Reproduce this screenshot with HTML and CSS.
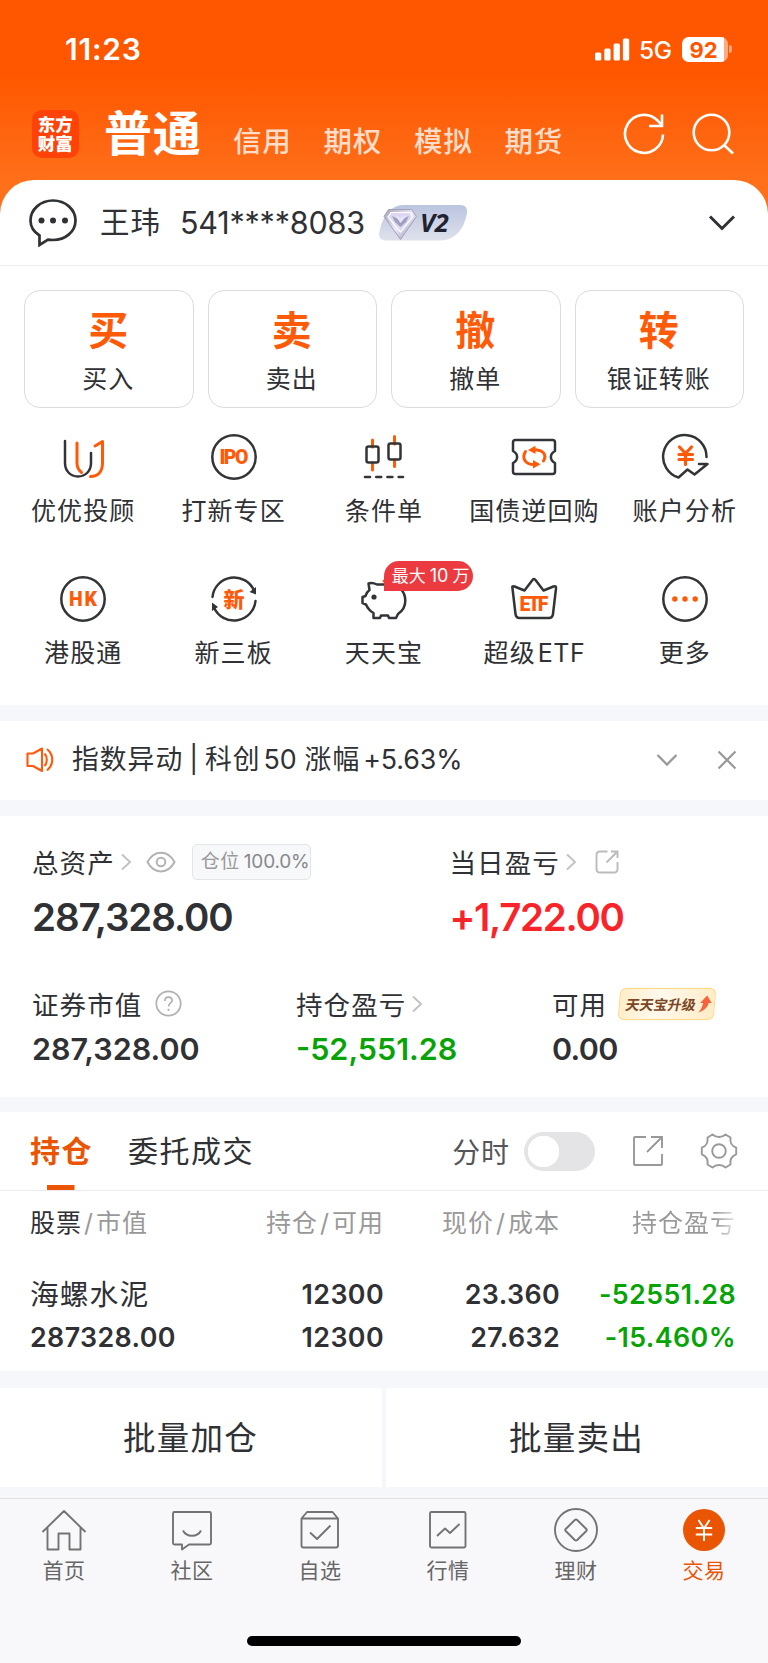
FILE: index.html
```html
<!DOCTYPE html>
<html lang="zh-CN">
<head>
<meta charset="utf-8">
<title>普通交易</title>
<link rel="stylesheet" href="styles.css">
</head>
<body>
<div class="app">
  <header class="top">
    <div class="status">
      <span class="time">11:23</span>
      <svg class="signal" width="35" height="23" viewBox="0 0 35 23" fill="#fff"><rect x="0" y="14.500" width="6.300" height="8" rx="1.500"/><rect x="9.300" y="10.500" width="6.300" height="12" rx="1.500"/><rect x="18.600" y="5.500" width="6.300" height="17" rx="1.500"/><rect x="27.900" y="0.500" width="6.300" height="22" rx="1.500"/></svg>
      <span class="net">5G</span>
      <span class="battery"><span class="level">92</span></span><i class="cap"></i>
    </div>
    <nav class="modes">
      <div class="logo"><span>东方</span><span>财富</span></div>
      <span class="mode on">普通</span>
      <span class="mode">信用</span><span class="mode">期权</span><span class="mode">模拟</span><span class="mode">期货</span>
      <svg class="refresh" width="44" height="44" viewBox="0 0 44 44" fill="none" stroke="#fff" stroke-width="2.600"><path d="M41 22.500A19 19 0 1 1 35.500 8.500L40 13.500M40 2.500V14H27"/></svg>
      <svg class="search" width="44" height="44" viewBox="0 0 44 44" fill="none" stroke="#fff" stroke-width="2.600"><circle cx="20.500" cy="20.500" r="17.800"/><path d="M32.500 32.500L42 41.500"/></svg>
    </nav>
  </header>

  <main class="sheet">
    <div class="account">
      <svg class="chat" width="48" height="48" viewBox="0 0 48 48" fill="none" stroke="#303134" stroke-width="2.700"><path d="M10.500 46V36.500C5 33 1.500 27.500 1.500 21.500 1.500 10.500 11.500 1.500 24 1.500s22.500 9 22.500 20S36.500 41 24 41c-1.500 0-3.500-.1-5-.4z"/><g fill="#303134" stroke="none"><circle cx="12.500" cy="21.500" r="3"/><circle cx="24" cy="21.500" r="3"/><circle cx="36" cy="21.500" r="3"/></g></svg>
      <span class="name">王玮</span><span class="number">541****8083</span>
      <div class="vip">
        <svg width="90" height="38" viewBox="0 0 90 38"><defs><linearGradient id="vb" x1="0" y1="0" x2="0" y2="1"><stop offset="0" stop-color="#bac4df"/><stop offset="1" stop-color="#dfe2ec"/></linearGradient><linearGradient id="vd" x1="0" y1="0" x2="1" y2="1"><stop offset="0" stop-color="#a5a2b8"/><stop offset=".5" stop-color="#ece9fb"/><stop offset="1" stop-color="#8f8aa3"/></linearGradient></defs><path d="M25 1H82Q90 1 89 9C87 20 81 36 62 36.500H8Q1 36.500 1 30C3 18 9 2 25 1z" fill="url(#vb)"/><path d="M10.500 5.500H33.500L38.500 12.500 22.500 35.500 6 12.500z" fill="url(#vd)" stroke="#a3a1b6" stroke-width="1"/><path d="M13 8.500H32L34.500 13 22.500 28 10 13z" fill="#dcd8ef" stroke="#fff" stroke-width="1.200"/><path d="M14 12l8.500 4 8.500-4-3 6-5.500 5-5.500-5z" fill="#a19ec0"/><path d="M17 11l5.500 3 6.500-3-6.500 8z" fill="#e6e5fa"/></svg>
        <span>V2</span>
      </div>
      <svg class="down" width="28" height="18" viewBox="0 0 28 18" fill="none" stroke="#303134" stroke-width="3"><path d="M2 2.500L14 14.500 26 2.500"/></svg>
    </div>

    <section class="actions">
      <div class="action"><b>买</b><span>买入</span></div>
      <div class="action"><b>卖</b><span>卖出</span></div>
      <div class="action"><b>撤</b><span>撤单</span></div>
      <div class="action"><b>转</b><span>银证转账</span></div>
    </section>

    <section class="tools">
      <div class="tool"><svg viewBox="0 0 48 48"><path class="k" d="M6 8V30C6 38 11.500 43.500 19 43.500S32 38 32 30V20"/><path class="o" d="M18 10V30C18 34 19.500 37 22.500 39.500M36 13L43.500 8.500V30C43.500 38.500 39 43.500 31.500 43.500"/></svg><span>优优投顾</span></div>
      <div class="tool"><svg viewBox="0 0 48 48"><circle class="k" cx="24" cy="24" r="21.700"/><text class="t" x="24" y="31" textLength="29">IPO</text></svg><span>打新专区</span></div>
      <div class="tool"><svg viewBox="0 0 48 48"><path class="o" d="M12.500 7V14M12.500 30V37M34.500 3.500V11M34.500 26.500V33.500"/><rect class="k" x="6.500" y="13.500" width="12" height="16" rx="2"/><rect class="k" x="28.500" y="10.500" width="12" height="16" rx="2"/><path class="k" stroke-dasharray="5 6.200" d="M5 44H43"/></svg><span>条件单</span></div>
      <div class="tool"><svg viewBox="0 0 48 48"><path class="k" d="M5.500 7H42.500Q45 7 45 9.500V18C39.500 21 39.500 27 45 30V38.500Q45 41 42.500 41H5.500Q3 41 3 38.500V30C8.500 27 8.500 21 3 18V9.500Q3 7 5.500 7z"/><path class="o" d="M15.500 18.500C11.500 25 15 31.500 24 31.500M33.500 28C37 22 33.500 16.800 24 16.800"/><path class="of" d="M18 17L25.500 12.800V21zM30.500 31.300L23 27V35.500z"/></svg><span>国债逆回购</span></div>
      <div class="tool"><svg viewBox="0 0 48 48"><path class="k" d="M45.500 24A21.700 21.700 0 1 0 17.500 44.500L26.500 36.500 33.500 41.500 46.500 31H38"/><path class="o y" d="M18.500 14L24.500 20.500 30.500 14M24.500 21V31.500M18 21.500H31.500M18 26.500H31.500"/></svg><span>账户分析</span></div>
      <div class="tool"><svg viewBox="0 0 48 48"><circle class="k" cx="24" cy="24" r="21.700"/><text class="t" x="24" y="31" textLength="28">HK</text></svg><span>港股通</span></div>
      <div class="tool"><svg viewBox="0 0 48 48"><path class="k" d="M2.500 22A21.700 21.700 0 0 1 44 15.500M45.500 26A21.700 21.700 0 0 1 4 32.500"/><path class="kf" d="M46 12V19.500L39.500 17zM2 36V27.500L8 32z"/><text class="t xin" x="24" y="32">新</text></svg><span>新三板</span></div>
      <div class="tool"><svg viewBox="0 0 48 48"><path class="k" d="M17 9.500C14 8 11 7.500 8.500 8.500L9.500 15C7.500 16.500 6 18.500 5.500 21L2.500 22V28L6 29.500C7.500 33 10 36 13.500 38V43H20L21 40.500H28L29 43H36L38 39C42.500 36 45.300 31 45.300 25.500 45.300 16 38 9.500 28 9.500z"/><circle class="kf" cx="14" cy="22" r="2.600"/><path class="o" d="M24 6C26 3 30 3 32 5"/></svg><em class="promo">最大<i>10</i>万</em><span>天天宝</span></div>
      <div class="tool"><svg viewBox="0 0 48 48"><path class="k" d="M2.500 13.500Q1.500 10.500 4.500 11.500L14.500 15.500 22.500 5Q24 3 25.500 5L33.500 15.500 43.500 11.500Q46.500 10.500 46 13.500L43 39Q42.500 43 39 43H9.500Q6 43 5.500 39z"/><text class="t" x="24" y="35.500" textLength="29">ETF</text></svg><span>超级<i class="lat">ETF</i></span></div>
      <div class="tool"><svg viewBox="0 0 48 48"><circle class="k" cx="24" cy="24" r="21.700"/><g class="of"><circle cx="13.800" cy="24" r="2.700"/><circle cx="24" cy="24" r="2.700"/><circle cx="34.200" cy="24" r="2.700"/></g></svg><span>更多</span></div>
    </section>

    <section class="news">
      <svg class="horn" width="28" height="26" viewBox="0 0 28 26" fill="none" stroke="#ff5a0c" stroke-width="2.100" stroke-linejoin="round"><path d="M1.500 6.500H7L16 1.500V24L7 19H1.500zM18.500 6.500C21.500 9.500 21.500 16 18.500 19M21 2C28 8 28 17.500 21 23.500"/></svg>
      <span class="headline">指数异动<i class="bar">|</i>科创<i>50</i><em>涨幅</em><i class="pct">+5.63%</i></span>
      <svg class="fold" width="22" height="14" viewBox="0 0 22 14" fill="none" stroke="#999" stroke-width="2.300"><path d="M1.500 2L11 11.500 20.500 2"/></svg>
      <svg class="close" width="20" height="20" viewBox="0 0 20 20" fill="none" stroke="#999" stroke-width="2.200"><path d="M1.500 1.500L18.500 18.500M18.500 1.500L1.500 18.500"/></svg>
    </section>

    <section class="assets">
      <div class="pair">
        <div class="stat">
          <div class="label">总资产<svg class="arrow" viewBox="0 0 12 18"><path d="M2 1.500L10 9 2 16.500"/></svg>
            <svg class="eye" width="30" height="22" viewBox="0 0 30 22" fill="none" stroke="#b3b3b3" stroke-width="2"><path d="M1.500 11C8-1.500 22-1.500 28.500 11 22 23.500 8 23.500 1.500 11z"/><circle cx="15" cy="11" r="4.300"/></svg>
            <span class="ratio">仓位<i>100.0%</i></span></div>
          <div class="big">287,328.00</div>
        </div>
        <div class="stat">
          <div class="label">当日盈亏<svg class="arrow" viewBox="0 0 12 18"><path d="M2 1.500L10 9 2 16.500"/></svg>
            <svg class="edit" width="24" height="24" viewBox="0 0 24 24" fill="none" stroke="#bbb" stroke-width="1.900"><path d="M12.500 1.500H5Q1.500 1.500 1.500 5V19Q1.500 22.500 5 22.500H19Q22.500 22.500 22.500 19V12M11.500 12.500L22 2M16 1.500H22.500V8"/></svg></div>
          <div class="big red">+1,722.00</div>
        </div>
      </div>
      <div class="trio">
        <div class="stat">
          <div class="label">证券市值<svg class="help" width="27" height="27" viewBox="0 0 27 27" fill="none" stroke="#b0b0b0" stroke-width="1.700"><circle cx="13.500" cy="13.500" r="12.200"/><path d="M9.800 11C9.800 6 17.200 6 17.200 10.500 17.200 13 13.500 13 13.500 16.500M13.500 18.800V21"/></svg></div>
          <div class="mid">287,328.00</div>
        </div>
        <div class="stat">
          <div class="label">持仓盈亏<svg class="arrow" viewBox="0 0 12 18"><path d="M2 1.500L10 9 2 16.500"/></svg></div>
          <div class="mid green">-52,551.28</div>
        </div>
        <div class="stat">
          <div class="label">可用<span class="upgrade"><b>天天宝升级</b><svg width="14" height="18" viewBox="0 0 14 18"><path d="M8.500 .5L13.500 8H10.500C10 12 7 15.500 1 17.500 3.800 14.500 4.800 11 5 8H2z" fill="#f8623c"/></svg></span></div>
          <div class="mid zero">0.00</div>
        </div>
      </div>
    </section>

    <section class="holdings">
      <div class="tabs">
        <span class="tab on">持仓</span><span class="tab">委托成交</span>
        <span class="minute">分时</span><span class="switch"></span>
        <svg class="share" width="32" height="32" viewBox="0 0 32 32" fill="none" stroke="#999" stroke-width="1.900"><path d="M14 2H3Q2 2 2 3V29Q2 30 3 30H29Q30 30 30 29V19M15 17L30 2M19 2H30V13"/></svg>
        <svg class="gear" width="38" height="38" viewBox="0 0 38 38" fill="none" stroke="#999" stroke-width="1.900" stroke-linejoin="round"><circle cx="19" cy="19" r="6.800"/><path d="M12.500 2.500C16 5.800 22 5.800 25.500 2.500L30.500 5.500C29.800 10.500 31.500 14 36.200 15.700V22.300C31.500 24 29.800 27.500 30.500 32.500L25.500 35.500C22 32.200 16 32.200 12.500 35.500L7.500 32.500C8.200 27.500 6.500 24 1.800 22.300V15.700C6.500 14 8.200 10.500 7.500 5.500z"/></svg>
      </div>
      <div class="row head"><span><b>股票</b><i>/</i>市值</span><span>持仓<i>/</i>可用</span><span>现价<i>/</i>成本</span><span class="fade">持仓盈亏</span></div>
      <div class="row"><span class="stock">海螺水泥</span><span>12300</span><span>23.360</span><span class="green">-52551.28</span></div>
      <div class="row"><span>287328.00</span><span>12300</span><span>27.632</span><span class="green">-15.460%</span></div>
    </section>

    <section class="bulk"><span>批量加仓</span><span>批量卖出</span></section>
  </main>

  <footer class="dock">
    <div class="items">
      <div class="item"><svg viewBox="0 0 46 46"><path d="M1.500 25L23 4 44.500 25M6.500 20.500V42.500H17.500V26.500H28.500V42.500H39.500V20.500"/></svg><span>首页</span></div>
      <div class="item"><svg viewBox="0 0 46 46"><path d="M5.500 5H40.500Q42 5 42 6.500V36Q42 37.500 40.500 37.500H20L13 42.500V37.500H5.500Q4 37.500 4 36V6.500Q4 5 5.500 5z"/><path d="M14 23.500C17.500 30.500 28.500 30.500 32 23.500"/></svg><span>社区</span></div>
      <div class="item"><svg viewBox="0 0 46 46"><path d="M4.500 11.500L10 5H35.500L41 11.500V38.500Q41 40.500 39 40.500H6.500Q4.500 40.500 4.500 38.500zM4.500 11.500H41M13 25.500L20 32 33.500 18.500"/></svg><span>自选</span></div>
      <div class="item"><svg viewBox="0 0 46 46"><rect x="5" y="5" width="35.500" height="35.500" rx="1.500"/><path d="M12 29L20 21.500 25 26 34.500 17"/></svg><span>行情</span></div>
      <div class="item"><svg viewBox="0 0 46 46"><circle cx="23" cy="23" r="21"/><path d="M21.800 13L12.700 22Q11.800 23 12.700 24L21.800 33Q23 34 24.200 33L33.300 24Q34.200 23 33.300 22L24.200 13Q23 12 21.800 13z"/></svg><span>理财</span></div>
      <div class="item on"><svg viewBox="0 0 46 46"><circle class="disc" cx="23" cy="23" r="21"/><path class="yen" d="M17.500 13L23 21.500 28.500 13M23 21.500V34M14.800 21H31.200M14.800 27.500H31.200"/></svg><span>交易</span></div>
    </div>
    <div class="home"></div>
  </footer>
</div>
</body>
</html>
```
FILE: styles.css
```css
* { box-sizing: border-box; }
body { margin: 0; background: #fff; color: #303134; font-family: Inter, "Noto Sans CJK SC", sans-serif; }
i, em { font-style: normal; }
svg { flex: none; display: block; }
.app { width: 768px; height: 1663px; display: flex; flex-direction: column; overflow: hidden; background: linear-gradient(#ff5700 75px, #ff701b 185px); }
.green { color: #07a307; }
.red { color: #f9242a; }

/* header */
.top { height: 179.500px; color: #fff; }
.status { height: 98px; padding-left: 65px; display: flex; align-items: center; }
.time { font-size: 30px; font-weight: 600; width: 530px; letter-spacing: .8px; line-height: 98px; }
.net { font-size: 24.500px; font-weight: 500; margin-left: 9px; width: 43px; line-height: 100px; letter-spacing: -.3px; padding-top: 2px; }
.battery { width: 46px; height: 25px; border-radius: 7px; overflow: hidden; background: rgba(255,255,255,.5); }
.level { display: block; width: 42px; height: 25px; padding-left: 1px; background: #fff; color: #ff5700; font-size: 22px; line-height: 26px; font-weight: 700; text-align: center; }
.cap { width: 3px; height: 8px; margin-left: 1px; border-radius: 0 4px 4px 0; background: rgba(255,255,255,.5); }
.modes { height: 72px; padding-left: 31.500px; display: flex; align-items: center; }
.logo { width: 47.500px; height: 48px; border-radius: 10px; background: #ff4208; display: flex; flex-direction: column; justify-content: center; align-items: center; font-size: 17.500px; line-height: 19.500px; font-weight: 900; }
.mode { font-size: 28.500px; font-weight: 500; color: #ffddcb; width: 90.500px; line-height: 40px; padding-top: 16px; letter-spacing: .8px; white-space: nowrap; }
.mode.on { font-size: 48px; font-weight: 700; color: #fff; width: 129px; margin-left: 25px; padding-top: 0; line-height: 72px; letter-spacing: .8px; }
.refresh { margin-left: 27px; }
.search { margin-left: 25px; }

/* account */
.sheet { background: #fff; border-radius: 34px 34px 0 0; }
.account { height: 86.500px; border-bottom: 1.500px solid #ededee; padding: 1px 32px 0 29px; display: flex; align-items: center; }
.chat { margin-top: 1px; }
.name { font-size: 29.500px; line-height: 40px; margin: -2px 0 0 23px; width: 80px; letter-spacing: .8px; }
.number { font-size: 30.500px; width: 198px; letter-spacing: -.2px; white-space: nowrap; }
.vip { width: 90px; height: 38px; display: grid; margin-top: 1px; }
.vip svg, .vip span { grid-area: 1 / 1; }
.vip span { padding-left: 42px; font: italic 700 25.500px/37px "Open Sans", sans-serif; color: #20222f; letter-spacing: -.3px; }
.down { margin-left: auto; }

/* quick actions */
.actions { padding: 24px 24px 0; display: grid; grid-template-columns: repeat(4, 1fr); gap: 14px; }
.action { height: 118px; border: 1.500px solid #dcdcde; border-radius: 16px; display: flex; flex-direction: column; align-items: center; padding: 15px 1px 0 0; }
.action b { font-size: 40px; line-height: 50px; color: #ff5a08; }
.action span { font-size: 25px; line-height: 47px; letter-spacing: 1px; }
.tools { height: 297px; padding: 25px 8px 0; display: grid; grid-template-columns: repeat(5, 1fr); grid-auto-rows: 141.500px; }
.tool { position: relative; display: flex; flex-direction: column; align-items: center; }
.tool svg { width: 48px; height: 48px; }
.tool span { font-size: 25px; line-height: 40px; margin-top: 10px; letter-spacing: 1.100px; white-space: nowrap; }
.lat { margin-left: 2px; letter-spacing: .5px; }
.k { fill: none; stroke: #333437; stroke-width: 2.500; stroke-linejoin: round; stroke-linecap: round; }
.o { fill: none; stroke: #ff5a08; stroke-width: 3; stroke-linejoin: round; stroke-linecap: round; }
.kf { fill: #333437; }
.of { fill: #ff5a08; }
.o.y { stroke-width: 3.200; }
.t { fill: #ff5a08; text-anchor: middle; font: 900 19.500px Roboto, sans-serif; }
.t.xin { font: 900 21px "Noto Sans CJK SC", sans-serif; }
.promo { position: absolute; left: 75px; top: -14px; width: 89px; height: 30px; border-radius: 15px 15px 15px 0; background: #eb3a40; color: #fff; font-size: 17px; line-height: 30px; padding-left: 8px; white-space: nowrap; }
.promo i { margin: 0 4px; font-size: 18px; }

/* news */
.news { height: 110.500px; border: solid #f6f7fa; border-width: 16px 0; padding: 0 31px 0 26px; display: flex; align-items: center; }
.headline { font-size: 26.800px; line-height: 40px; margin: -2px 0 0 18px; letter-spacing: 1px; white-space: nowrap; }
.headline i { letter-spacing: -.1px; margin-left: 3px; }
.headline .bar { margin: 0 7px 0 6px; }
.headline em { margin-left: 8px; }
.fold { margin-left: auto; }
.close { margin-left: 39px; }

/* assets */
.assets { height: 281.500px; padding: 25px 0 0 32px; }
.pair { display: grid; grid-template-columns: 417.500px 1fr; height: 142px; }
.trio { display: grid; grid-template-columns: 264px 256px 1fr; }
.label { height: 42px; display: flex; align-items: center; font-size: 26.500px; letter-spacing: 1.100px; }
.arrow { width: 12px; height: 18px; margin-left: 5px; fill: none; stroke: #c2c2c2; stroke-width: 1.900; }
.eye { margin-left: 14px; }
.ratio { margin-left: 16px; width: 119px; height: 36px; border: 1.500px solid #e4e5e8; border-radius: 5px; background: #f7f8fa; color: #999; font-size: 19px; line-height: 34px; letter-spacing: .5px; padding-left: 8px; white-space: nowrap; }
.ratio i { margin-left: 4px; color: #88898c; letter-spacing: -.2px; }
.edit { margin-left: 18px; }
.help { margin-left: 13px; }
.big { font-size: 38.500px; font-weight: 600; line-height: 68px; letter-spacing: -1.100px; }
.big.red { letter-spacing: -1.300px; }
.mid { font-size: 30.500px; font-weight: 600; line-height: 47px; }
.mid.zero { letter-spacing: -.7px; }
.upgrade { margin-left: 12px; width: 96px; height: 32px; border: 1.500px solid #ffd980; border-radius: 6px; transform: skewX(-5deg); background: linear-gradient(100deg, #ffedc8, #fff9ec 40%, #ffecc6); display: flex; align-items: center; padding-left: 6px; }
.upgrade b { font-size: 14px; color: #7b4625; letter-spacing: 0; transform: skewX(-6deg); white-space: nowrap; }
.upgrade svg { margin-left: 2px; }

/* holdings */
.holdings { height: 290.500px; border: solid #f6f7fa; border-width: 15px 0 17px; }
.tabs { height: 79px; border-bottom: 1px solid #ececee; padding: 0 30px; display: flex; align-items: center; }
.tab { font-size: 30px; letter-spacing: 1.500px; line-height: 79px; }
.tab.on { font-weight: 700; color: #ea5504; width: 98px; height: 78px; background: linear-gradient(#ea5504, #ea5504) 16.500px 100% / 27.500px 5px no-repeat; }
.minute { margin-left: auto; font-size: 28px; color: #555659; letter-spacing: .9px; }
.switch { margin-left: 14px; width: 71px; height: 39px; border-radius: 20px; background: radial-gradient(circle at 19.500px 50%, #fff 15.500px, #e4e4e6 16px); }
.share { margin-left: 37px; }
.gear { margin-left: 36px; }
.row { display: grid; grid-template-columns: 150px 204px 176px 176px; padding-left: 30px; font-size: 26.800px; line-height: 43px; font-weight: 600; letter-spacing: .4px; white-space: nowrap; }
.row span { text-align: right; }
.row span:first-child { text-align: left; }
.row.head { font-size: 25px; font-weight: 400; line-height: 64px; height: 81.500px; color: #999; letter-spacing: 1px; }
.row.head b { font-weight: 400; color: #303134; }
.head i { margin: 0 2px; }
.head .fade { background: linear-gradient(90deg, #999 88%, #e8e8e8); -webkit-background-clip: text; background-clip: text; color: transparent; }
.row .stock { font-size: 28.800px; font-weight: 400; letter-spacing: 1px; }
.bulk { display: grid; grid-template-columns: 1fr 1fr; gap: 4px; height: 110px; padding-bottom: 11px; background: #f6f7fa; }
.bulk span { background: #fff; text-align: center; font-size: 32.500px; height: 99px; line-height: 102px; letter-spacing: 1.300px; padding-right: 1px; }

/* dock */
.dock { flex: 1; background: #f8f8fb; border-top: 1.500px solid #dfdfe2; display: flex; flex-direction: column; align-items: center; justify-content: space-between; padding: 8px 0 17px; }
.items { width: 768px; display: grid; grid-template-columns: repeat(6, 1fr); }
.item { display: flex; flex-direction: column; align-items: center; color: #666; }
.item svg { width: 46px; height: 46px; fill: none; stroke: #737373; stroke-width: 1.900; stroke-linejoin: round; }
.item span { font-size: 21px; line-height: 30px; margin-top: 3px; letter-spacing: .6px; }
.item.on { color: #ea5504; }
.item .disc { fill: #ea5504; stroke: none; }
.item .yen { stroke: #fff; }
.home { width: 274px; height: 10px; border-radius: 5px; background: #000; }
```
